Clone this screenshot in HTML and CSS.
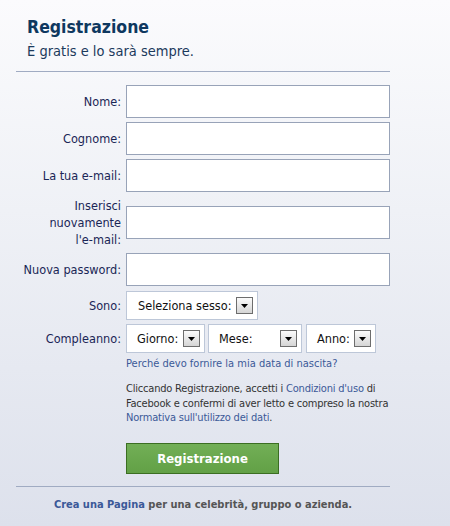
FILE: index.html
```html
<!DOCTYPE html>
<html lang="it">
<head>
<meta charset="utf-8">
<title>Registrazione</title>
<link rel="stylesheet" href="styles.css">
</head>
<body>
<div class="page">
  <header class="head">
    <h1 class="title">Registrazione</h1>
    <p class="subtitle">È gratis e lo sarà sempre.</p>
  </header>
  <form class="form">
    <label class="label">Nome:</label>
    <div class="input"></div>
    <label class="label">Cognome:</label>
    <div class="input"></div>
    <label class="label">La tua e-mail:</label>
    <div class="input"></div>
    <label class="label label-multi">Inserisci<br>nuovamente<br>l'e-mail:</label>
    <div class="input"></div>
    <label class="label">Nuova password:</label>
    <div class="input"></div>
    <label class="label label-sel">Sono:</label>
    <div class="selects sel-first">
      <div class="select"><span class="sel-text">Seleziona sesso:</span><span class="arrow"><svg width="7" height="4" viewBox="0 0 7 4"><path d="M0 0H7L3.5 4Z" fill="#000"/></svg></span></div>
    </div>
    <label class="label">Compleanno:</label>
    <div class="selects">
      <div class="select sel-day"><span class="sel-text">Giorno:</span><span class="arrow"><svg width="7" height="4" viewBox="0 0 7 4"><path d="M0 0H7L3.5 4Z" fill="#000"/></svg></span></div>
      <div class="select sel-month"><span class="sel-text">Mese:</span><span class="arrow"><svg width="7" height="4" viewBox="0 0 7 4"><path d="M0 0H7L3.5 4Z" fill="#000"/></svg></span></div>
      <div class="select sel-year"><span class="sel-text">Anno:</span><span class="arrow"><svg width="7" height="4" viewBox="0 0 7 4"><path d="M0 0H7L3.5 4Z" fill="#000"/></svg></span></div>
    </div>
    <div class="spacer"></div>
    <a class="link why" href="#">Perché devo fornire la mia data di nascita?</a>
    <div class="spacer"></div>
    <p class="terms">Cliccando Registrazione, accetti i <a class="link" href="#">Condizioni d'uso</a> di<br>Facebook e confermi di aver letto e compreso la nostra<br><a class="link" href="#">Normativa sull'utilizzo dei dati</a>.</p>
    <div class="spacer"></div>
    <div class="btn-wrap"><span class="button">Registrazione</span></div>
  </form>
  <div class="footer"><a class="link strong" href="#">Crea una Pagina</a> per una celebrità, gruppo o azienda.</div>
</div>
</body>
</html>
```
FILE: styles.css
```css
html, body {
  margin: 0;
  padding: 0;
}
body {
  width: 450px;
  height: 526px;
  background: linear-gradient(to bottom, #fbfbfd 0%, #eff1f6 40%, #dde1ec 100%);
  font-family: "DejaVu Sans Condensed", "DejaVu Sans", sans-serif;
  font-stretch: condensed;
  color: #333;
  overflow: hidden;
}
.page {
  width: 374px;
  margin-left: 16px;
}
.head {
  padding: 16px 0 11px 11px;
  border-bottom: 1px solid #a0abc2;
}
.title {
  margin: 0;
  font-size: 17.5px;
  line-height: 22px;
  font-weight: bold;
  color: #0e385f;
}
.subtitle {
  margin: 4px 0 0;
  font-size: 14.5px;
  line-height: 18px;
  color: #1c3a5c;
}
.form {
  margin-top: 13px;
  display: grid;
  grid-template-columns: 105px 264px;
  column-gap: 5px;
  row-gap: 4px;
}
.label {
  align-self: center;
  text-align: right;
  font-size: 12.6px;
  line-height: 17px;
  color: #1a2656;
  white-space: nowrap;
}
.label-multi {
  padding: 1px 0;
}
.input {
  align-self: center;
  box-sizing: border-box;
  height: 33px;
  background: #fff;
  border: 1px solid #98a3b8;
}
.label-sel, .sel-first {
  margin-top: 1px;
}
.selects {
  display: flex;
  gap: 3px;
}
.select {
  box-sizing: border-box;
  height: 29px;
  display: flex;
  align-items: center;
  justify-content: space-between;
  padding: 0 4px 0 10px;
  background: #fff;
  border: 1px solid #bdc7d8;
  font-size: 12.6px;
  color: #111;
  white-space: nowrap;
}
.select:first-child {
  width: 132px;
}
.sel-first .select {
  padding-left: 11px;
}
.selects .sel-day {
  width: 79px;
}
.sel-month {
  width: 94px;
}
.sel-year {
  width: 70px;
  margin-left: 1px;
}
.arrow {
  box-sizing: border-box;
  width: 17px;
  height: 17px;
  display: flex;
  align-items: center;
  justify-content: center;
  border: 1px solid #6d6d6d;
  background: linear-gradient(to bottom, #fbfbfb, #d5d5d5);
}
.spacer {
  grid-column: 1;
}
.link {
  color: #3b5998;
  text-decoration: none;
}
.why {
  font-size: 11px;
  line-height: 14px;
  white-space: nowrap;
}
.terms {
  margin: 7px 0 0;
  font-size: 11px;
  line-height: 14.5px;
  color: #333;
  white-space: nowrap;
  letter-spacing: -0.2px;
}
.btn-wrap {
  margin-top: 13px;
}
.button {
  box-sizing: border-box;
  display: flex;
  align-items: center;
  justify-content: center;
  width: 153px;
  height: 31px;
  background: linear-gradient(to bottom, #72af56, #62a046);
  border: 1px solid #3b6e22;
  color: #fff;
  font-size: 13px;
  font-weight: bold;
}
.footer {
  margin-top: 12px;
  padding-top: 11px;
  border-top: 1px solid #a0abc2;
  text-align: center;
  font-size: 11px;
  line-height: 14px;
  font-weight: bold;
  color: #555;
  white-space: nowrap;
}
.strong {
  font-weight: bold;
}
```
